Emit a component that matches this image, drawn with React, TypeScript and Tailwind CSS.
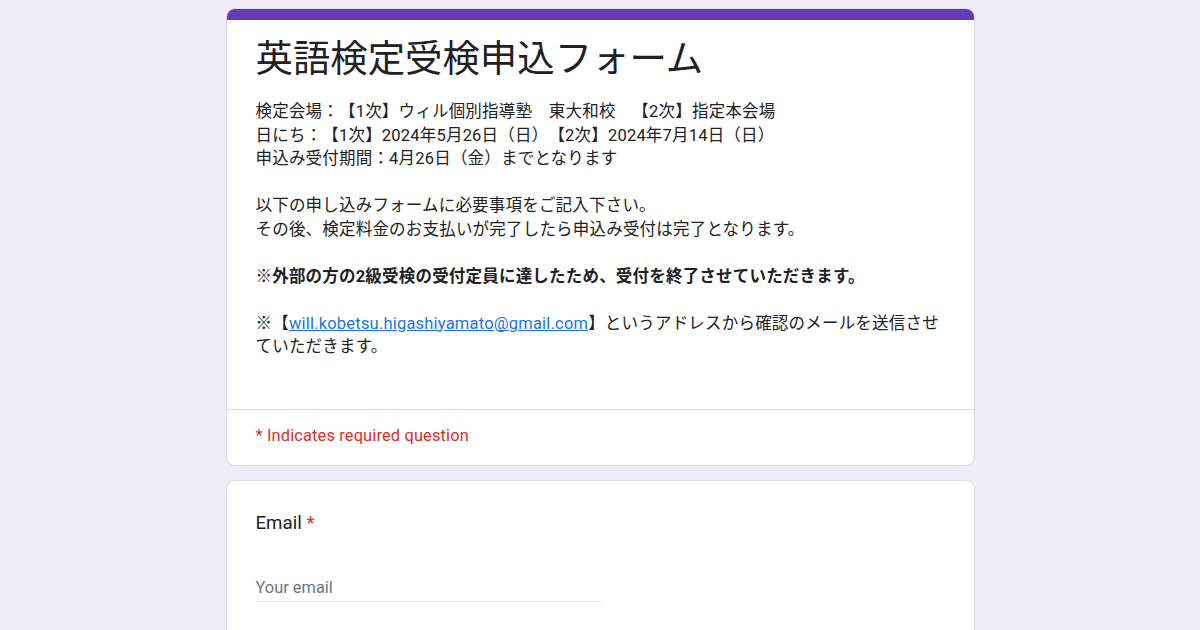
import React from 'react';

const jp = { fontFamily: 'Roboto, "Noto Sans CJK JP", sans-serif' };

export default function App() {
	return (
		<div className="min-h-[630px] w-full bg-[#f0ebf8] pt-[8px] [text-spacing-trim:space-all]" style={jp}>
			<div className="mx-auto w-[749px]">
				<div className="overflow-hidden rounded-[9px] border border-[#dadce0] bg-white">
					<div className="h-[11px] bg-[#673ab7]" />
					<div className="px-[29px] pt-[16px] pb-[50px]">
						<h1 className="text-[37.4px] leading-[46px] text-[#202124]">英語検定受検申込フォーム</h1>
						<div className="mt-[18px] text-[16.5px] leading-[23.5px] tracking-[0.2px] text-[#202124]">
							<p>検定会場：【1次】ウィル個別指導塾　東大和校　【2次】指定本会場</p>
							<p>日にち：【1次】2024年5月26日（日）【2次】2024年7月14日（日）</p>
							<p>申込み受付期間：4月26日（金）までとなります</p>
							<p>&nbsp;</p>
							<p>以下の申し込みフォームに必要事項をご記入下さい。</p>
							<p>その後、検定料金のお支払いが完了したら申込み受付は完了となります。</p>
							<p>&nbsp;</p>
							<p className="font-bold">※外部の方の2級受検の受付定員に達したため、受付を終了させていただきます。</p>
							<p>&nbsp;</p>
							<p>
								※【<a href="#" className="text-[#1a73e8] underline">will.kobetsu.higashiyamato@gmail.com</a>】というアドレスから確認のメールを送信させていただきます。
							</p>
						</div>
					</div>
					<div className="border-t border-[#dadce0] px-[29px] pt-[15px] pb-[18px]">
						<p className="text-[16.4px] leading-[22px] tracking-[0.15px] text-[#d93025]">* Indicates required question</p>
					</div>
				</div>
				<div className="mt-[14px] h-[200px] rounded-[9px] border border-[#dadce0] bg-white px-[29px] pt-[28px]">
					<p className="text-[18.7px] leading-[28px] text-[#202124]">
						Email <span className="text-[#d93025]">*</span>
					</p>
					<div className="mt-[39px] w-[345px] border-b border-[#e0e0e0] pb-[1px]">
						<span className="text-[16.4px] leading-[22px] text-[#70757a]">Your email</span>
					</div>
				</div>
			</div>
		</div>
	);
}
